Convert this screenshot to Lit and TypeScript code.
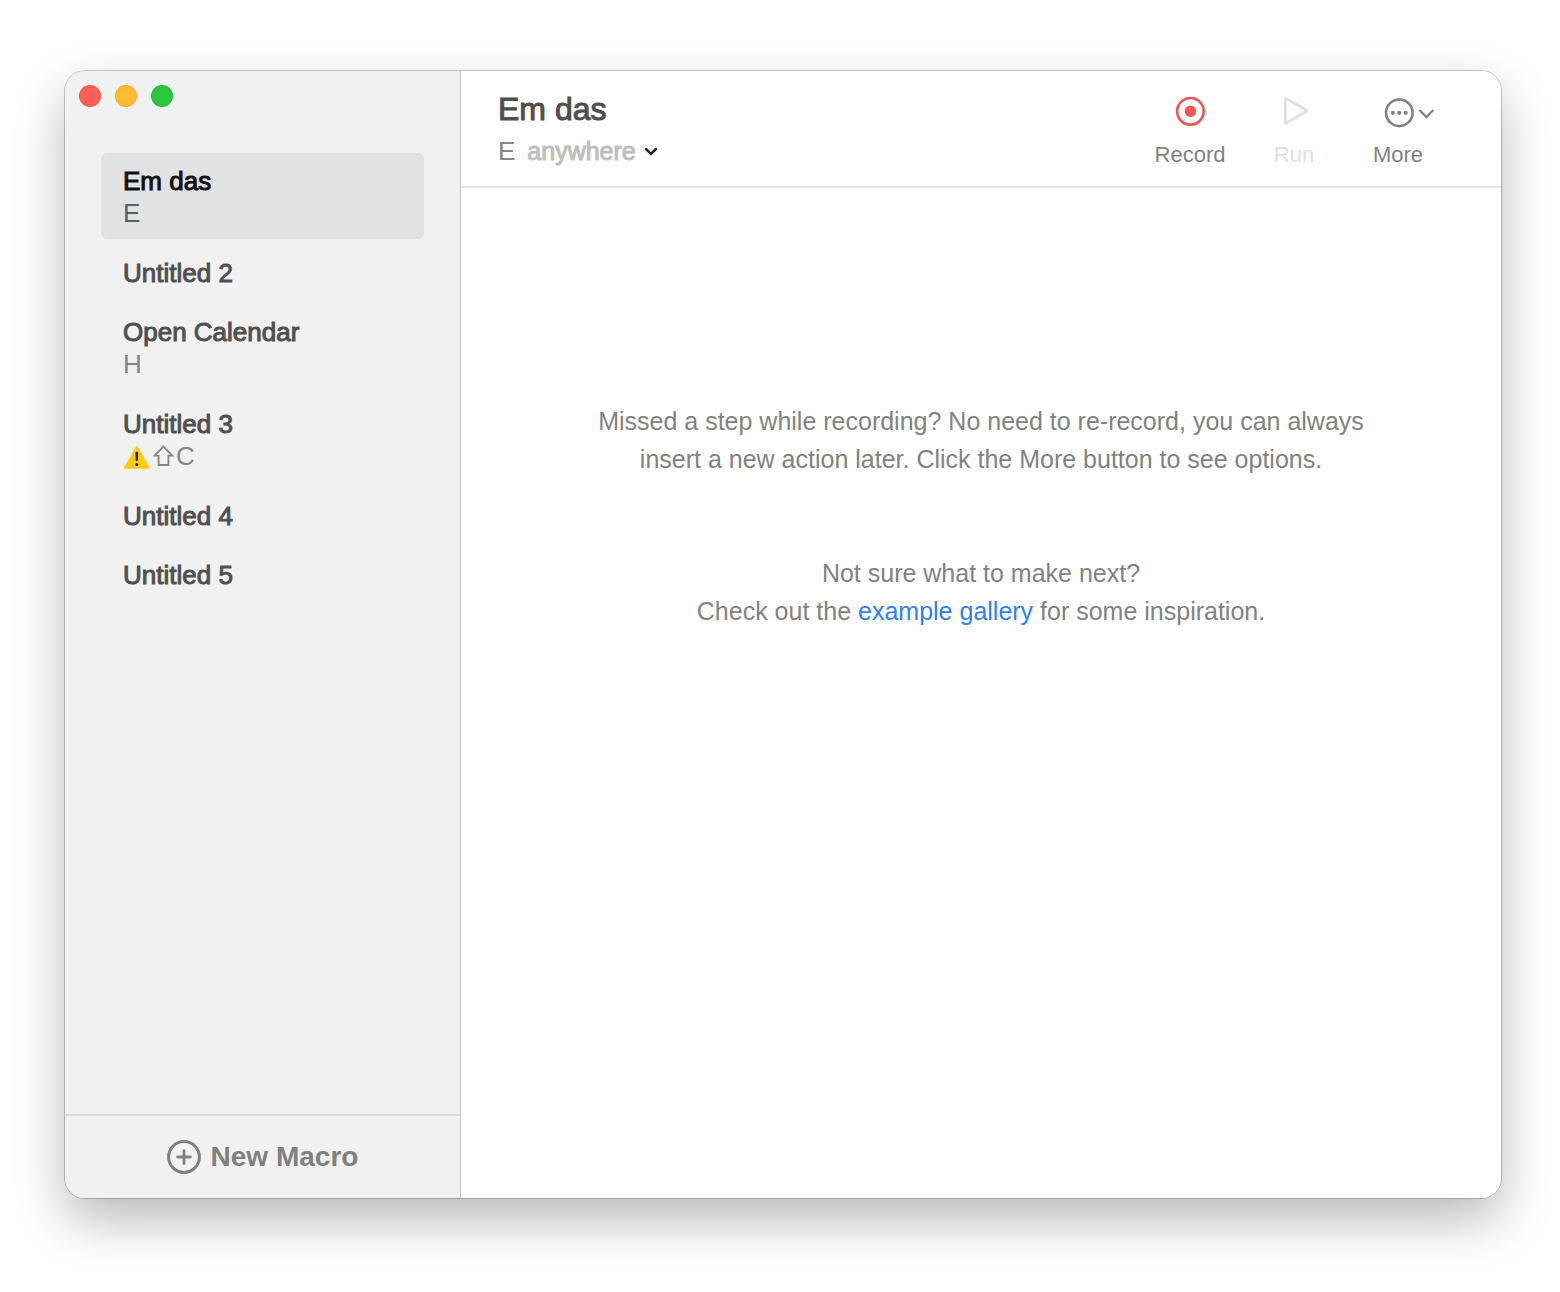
import { LitElement, html, css, svg, nothing } from "lit";
import { customElement, property, state } from "lit/decorators.js";
import { classMap } from "lit/directives/class-map.js";

interface Macro {
  name: string;
  keys?: string;
  shift?: boolean;
  warning?: boolean;
}

const MACROS: Macro[] = [
  { name: "Em das", keys: "E" },
  { name: "Untitled 2" },
  { name: "Open Calendar", keys: "H" },
  { name: "Untitled 3", keys: "C", shift: true, warning: true },
  { name: "Untitled 4" },
  { name: "Untitled 5" },
];

const buttonReset = css`
  button {
    appearance: none;
    border: 0;
    margin: 0;
    padding: 0;
    background: none;
    color: inherit;
    font: inherit;
    text-align: inherit;
  }
  svg {
    display: block;
    flex: none;
  }
`;

@customElement("macro-sidebar")
export class MacroSidebar extends LitElement {
  static styles = [
    buttonReset,
    css`
      :host {
        display: flex;
        flex-direction: column;
        box-sizing: border-box;
        background: #f1f1f1;
        border-right: 1px solid #c6c6c6;
      }
      .lights {
        display: flex;
        gap: 14px;
        padding: 14px;
      }
      .light {
        width: 22px;
        height: 22px;
        border-radius: 50%;
        box-shadow: inset 0 0 0 1px rgba(0, 0, 0, 0.06);
      }
      .close {
        background: #ff5f57;
      }
      .minimize {
        background: #febc2e;
      }
      .zoom {
        background: #28c840;
      }
      .list {
        display: flex;
        flex-direction: column;
        gap: 6px;
        list-style: none;
        margin: 0;
        padding: 32px 36px;
        flex: 1;
      }
      .item {
        display: block;
        width: 100%;
        box-sizing: border-box;
        padding: 12px 22px 9px;
        border-radius: 6px;
        color: #505050;
        line-height: 32px;
      }
      .keyed {
        padding-bottom: 10px;
      }
      .selected {
        background: #e1e2e4;
        color: #111;
      }
      .name {
        display: block;
        -webkit-text-stroke: 1px currentColor;
      }
      .keys {
        display: flex;
        align-items: center;
        gap: 2px;
        color: #858585;
      }
      .selected .keys {
        color: #5c5c5c;
      }
      .footer {
        display: flex;
        justify-content: center;
        border-top: 2px solid #dcdcdc;
        padding: 24px 0;
      }
      .new {
        display: flex;
        align-items: center;
        gap: 10px;
        color: #808080;
        font-size: 28px;
        font-weight: 700;
        line-height: 34px;
      }
    `,
  ];

  @property({ attribute: false }) macros: Macro[] = [];
  @property({ type: Number }) selected = 0;

  private pick(index: number) {
    this.dispatchEvent(new CustomEvent("pick", { detail: index }));
  }

  private warningIcon() {
    return svg`<svg width="28" height="28" viewBox="0 0 28 28" role="img" aria-label="Warning">
      <path d="M13.8 4.6 26 26H1.6Z" fill="#ffcb0f" stroke="#ffcb0f" stroke-width="1.6" stroke-linejoin="round"/>
      <path d="M12.9 10.2h1.8l-.3 8.4h-1.2Z" fill="#1c1a10" stroke="#1c1a10" stroke-width=".8" stroke-linejoin="round"/>
      <circle cx="13.8" cy="22.4" r="1.5" fill="#1c1a10"/>
    </svg>`;
  }

  private shiftIcon() {
    return svg`<svg width="21" height="22" viewBox="0 0 21 22" role="img" aria-label="Shift">
      <path d="M10.5 1.6 19.3 10.6H15.4V20H5.6V10.6H1.7Z" fill="none" stroke="currentColor" stroke-width="1.8"/>
    </svg>`;
  }

  render() {
    return html`
      <div class="lights">
        <button class="light close" aria-label="Close"></button>
        <button class="light minimize" aria-label="Minimize"></button>
        <button class="light zoom" aria-label="Zoom"></button>
      </div>
      <ul class="list">
        ${this.macros.map(
          (macro, i) => html`<li>
            <button
              class=${classMap({ item: true, keyed: !!macro.keys, selected: i === this.selected })}
              @click=${() => this.pick(i)}
            >
              <span class="name">${macro.name}</span>
              ${macro.keys
                ? html`<span class="keys">
                    ${macro.warning ? this.warningIcon() : nothing}
                    ${macro.shift ? this.shiftIcon() : nothing}
                    <span>${macro.keys}</span>
                  </span>`
                : nothing}
            </button>
          </li>`
        )}
      </ul>
      <div class="footer">
        <button class="new">
          <svg width="34" height="34" viewBox="0 0 34 34" aria-hidden="true">
            <circle cx="17" cy="17" r="15.4" fill="none" stroke="currentColor" stroke-width="3" />
            <path d="M17 10.6v12.8M10.6 17h12.8" stroke="currentColor" stroke-width="2.8" stroke-linecap="round" />
          </svg>
          New Macro
        </button>
      </div>
    `;
  }
}

@customElement("macro-toolbar")
export class MacroToolbar extends LitElement {
  static styles = [
    buttonReset,
    css`
      :host {
        display: flex;
        justify-content: space-between;
        align-items: flex-start;
        border-bottom: 2px solid #e4e4e4;
        padding: 19px 51px 15px 37px;
      }
      .heading {
        display: flex;
        flex-direction: column;
        gap: 3px;
      }
      .title {
        margin: 0;
        font-size: 32px;
        font-weight: 400;
        line-height: 38px;
        color: #4f4f4f;
        -webkit-text-stroke: 1px currentColor;
      }
      .trigger {
        display: flex;
        align-items: center;
        gap: 12px;
        line-height: 40px;
        color: #868686;
      }
      .scope {
        display: flex;
        align-items: center;
        gap: 8px;
        color: #bebebe;
      }
      .select {
        appearance: none;
        border: 0;
        margin: 0;
        padding: 0;
        background: none;
        color: inherit;
        font: inherit;
        font-size: 25px;
        -webkit-text-stroke: 1px currentColor;
      }
      .chevron {
        color: #1e1e1e;
        pointer-events: none;
      }
      .actions {
        display: flex;
      }
      .action {
        width: 104px;
        display: flex;
        flex-direction: column;
        align-items: center;
        gap: 12px;
        padding-top: 4px;
        font-size: 22px;
        line-height: 26px;
        color: #828282;
      }
      .action:disabled {
        color: #e0e0e0;
      }
    `,
  ];

  @property({ attribute: false }) macro: Macro = MACROS[0];

  render() {
    return html`
      <div class="heading">
        <h1 class="title">${this.macro.name}</h1>
        <div class="trigger">
          <span>${this.macro.keys}</span>
          <label class="scope">
            <select class="select" aria-label="Scope">
              <option>anywhere</option>
            </select>
            <svg class="chevron" width="14" height="9" viewBox="0 0 14 9" aria-hidden="true">
              <path d="M2 2 7 6.8 12 2" fill="none" stroke="currentColor" stroke-width="2.5" stroke-linecap="round" stroke-linejoin="miter" />
            </svg>
          </label>
        </div>
      </div>
      <div class="actions">
        <button class="action">
          <svg width="72" height="36" viewBox="0 0 72 36" aria-hidden="true">
            <circle cx="36.4" cy="17.3" r="13.3" fill="none" stroke="#ee5458" stroke-width="2.7" />
            <circle cx="36.4" cy="17.3" r="5.7" fill="#ee5458" />
          </svg>
          Record
        </button>
        <button class="action" disabled>
          <svg width="72" height="36" viewBox="0 0 72 36" aria-hidden="true">
            <path d="M27.2 5.6Q27.2 4 28.7 4.8L48.2 16Q49.5 16.8 48.2 17.6L28.7 28.8Q27.2 29.6 27.2 28Z" fill="none" stroke="currentColor" stroke-width="2.8" stroke-linejoin="round" />
          </svg>
          Run
        </button>
        <button class="action">
          <svg width="72" height="36" viewBox="0 0 72 36" aria-hidden="true">
            <circle cx="37.3" cy="18.8" r="13.3" fill="none" stroke="currentColor" stroke-width="2.6" />
            <g fill="currentColor">
              <circle cx="30.9" cy="18.8" r="2.1" />
              <circle cx="37.3" cy="18.8" r="2.1" />
              <circle cx="43.7" cy="18.8" r="2.1" />
            </g>
            <path d="M58.2 16.8 64.4 23 70.6 16.8" fill="none" stroke="currentColor" stroke-width="2.3" stroke-linecap="round" />
          </svg>
          More
        </button>
      </div>
    `;
  }
}

@customElement("app-root")
export class AppRoot extends LitElement {
  static styles = css`
    :host {
      display: flex;
      box-sizing: border-box;
      min-height: 100vh;
      padding: 71px 59px 94px 65px;
      background: #fff;
      font-family: "Liberation Sans", Arial, sans-serif;
      font-size: 26px;
    }
    .window {
      flex: 1;
      display: grid;
      grid-template-columns: 396px 1fr;
      border-radius: 20px;
      box-shadow: 0 0 0 1px rgba(0, 0, 0, 0.2), 0 22px 52px rgba(0, 0, 0, 0.28);
    }
    .sidebar {
      border-radius: 20px 0 0 20px;
    }
    .main {
      display: flex;
      flex-direction: column;
      background: #fff;
      border-radius: 0 20px 20px 0;
    }
    .empty {
      display: flex;
      flex-direction: column;
      gap: 76px;
      padding: 214px 100px 0;
      text-align: center;
      font-size: 25px;
      line-height: 38px;
      color: #828282;
    }
    .hint {
      margin: 0;
    }
    .link {
      color: #2f7ff5;
      text-decoration: none;
    }
  `;

  @state() private selected = 0;

  render() {
    return html`
      <div class="window">
        <macro-sidebar
          class="sidebar"
          .macros=${MACROS}
          .selected=${this.selected}
          @pick=${(e: CustomEvent<number>) => (this.selected = e.detail)}
        ></macro-sidebar>
        <main class="main">
          <macro-toolbar .macro=${MACROS[this.selected]}></macro-toolbar>
          <section class="empty">
            <p class="hint">
              Missed a step while recording? No need to re-record, you can always<br />
              insert a new action later. Click the More button to see options.
            </p>
            <p class="hint">
              Not sure what to make next?<br />
              Check out the <a class="link" href="#gallery">example gallery</a> for some inspiration.
            </p>
          </section>
        </main>
      </div>
    `;
  }
}
